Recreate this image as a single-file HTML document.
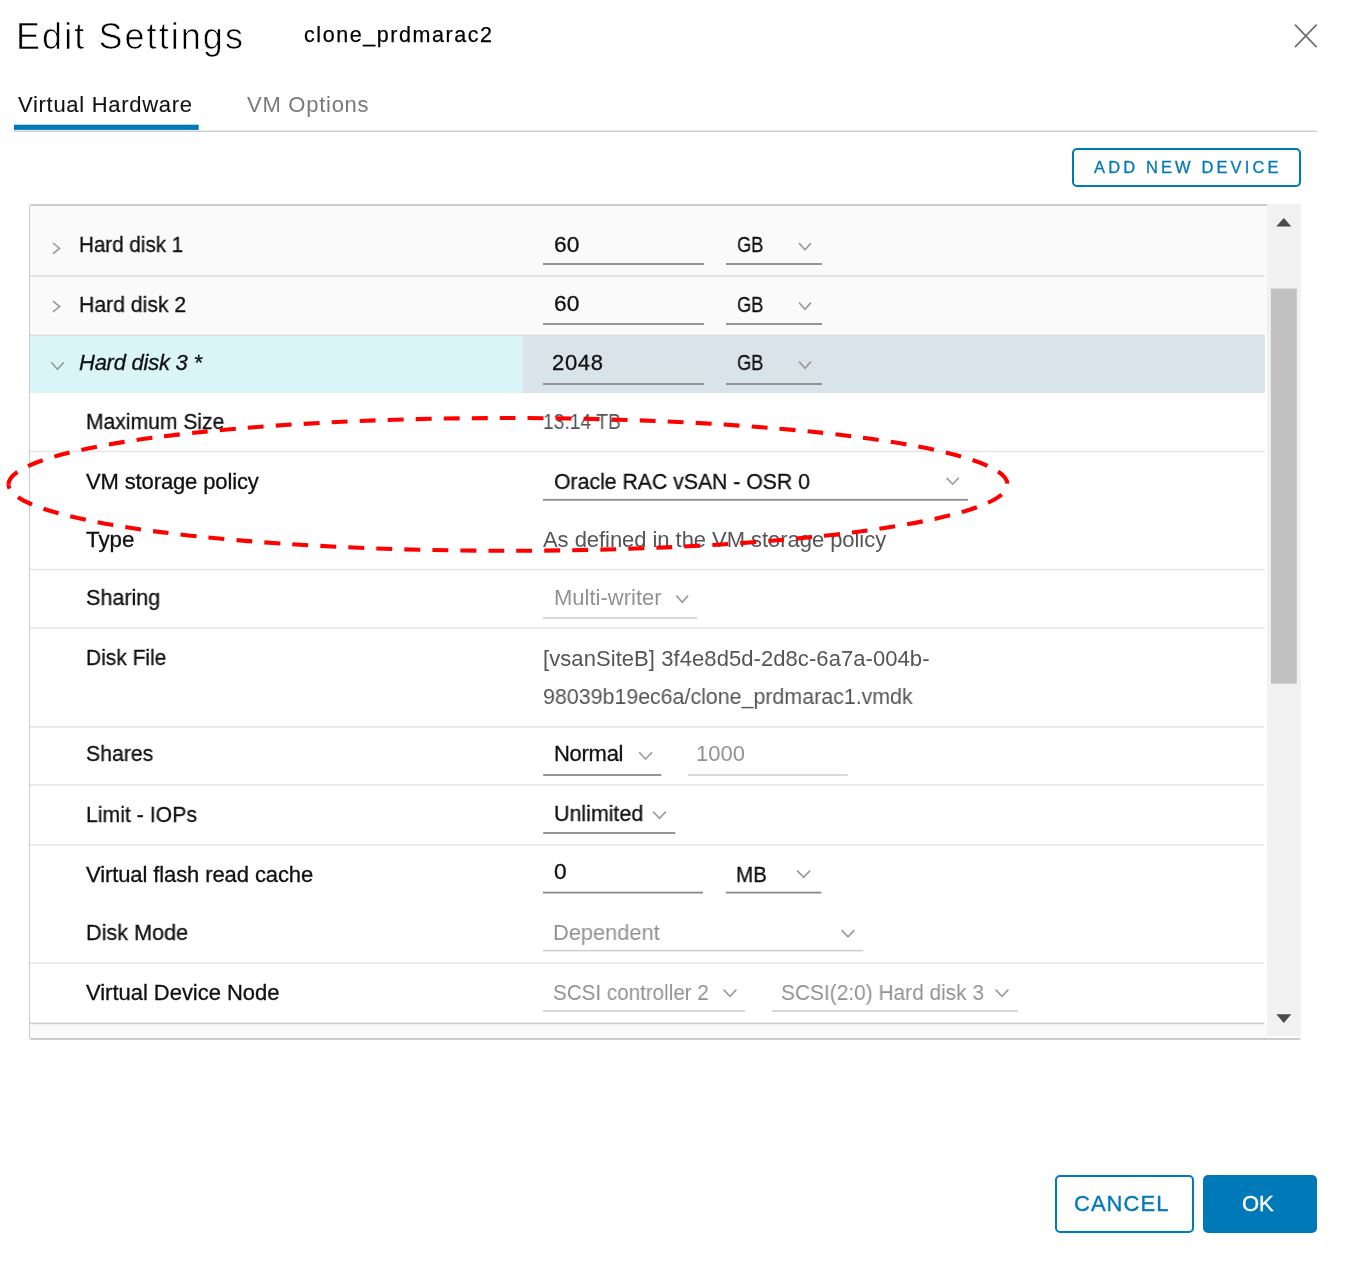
<!DOCTYPE html>
<html lang="en"><head><meta charset="utf-8"><title>Edit Settings</title>
<style>
html,body{margin:0;padding:0;background:#fff;}
body{width:1363px;height:1269px;position:relative;overflow:hidden;font-family:"Liberation Sans",sans-serif;}
.t{position:absolute;white-space:pre;transform-origin:0 50%;will-change:transform;}
.l,.i,.btn{position:absolute;}
.btn{box-sizing:border-box;}
#panel{position:absolute;left:29px;top:204.4px;width:1271.5px;height:836px;box-sizing:border-box;border:1.3px solid #cccccc;border-top-width:2px;border-bottom-width:2.4px;border-right:0;border-radius:3px;background:#fff;}
</style></head><body>
<div class="btn" style="left:1072px;top:148px;width:229px;height:39px;border:2px solid #0079b8;border-radius:5px"></div>
<div id="panel"></div>
<div class="l" style="left:30px;top:206px;width:1237px;height:130px;background:#fafafa"></div>
<div class="l" style="left:30px;top:336px;width:493px;height:57px;background:#d9f5f8"></div>
<div class="l" style="left:523px;top:336px;width:741.5px;height:57px;background:#d8e3ea"></div>
<div class="l" style="left:30px;top:1024px;width:1237px;height:14px;background:#fafafa"></div>
<div class="l" style="left:1267px;top:204px;width:34px;height:832px;background:#f1f1f1"></div>
<div class="btn" style="left:1054.6px;top:1175px;width:139.4px;height:57.7px;border:2px solid #0079b8;border-radius:5px"></div>
<div class="btn" style="left:1203px;top:1175px;width:113.8px;height:57.7px;background:#0079b8;border-radius:5px"></div>
<svg class="i" style="left:0;top:0" width="1363" height="1269" viewBox="0 0 1363 1269">
<rect x="14" y="130.50" width="1303.0" height="1.4" fill="#cdcdcd"/>
<rect x="14" y="124.7" width="184.7" height="5.2" fill="#0079b8"/>
<path d="M1295 24.6 L1316.6 47.2 M1316.6 24.6 L1295 47.2" stroke="#6e6e6e" stroke-width="1.7" fill="none"/>
<rect x="1270.9" y="288.6" width="25.9" height="395" fill="#c1c1c1"/>
<path d="M1276.3 226.6 L1283.8 217.9 L1291.3 226.6 Z" fill="#4a4a4a"/>
<path d="M1276.3 1014.2 L1291.3 1014.2 L1283.8 1022.9 Z" fill="#4a4a4a"/>
<rect x="30" y="275.00" width="1234.5" height="1.6" fill="#dedede"/>
<rect x="30" y="334.60" width="1234.5" height="1.6" fill="#dedede"/>
<rect x="30" y="450.60" width="1234.5" height="1.6" fill="#e6e6e6"/>
<rect x="30" y="568.80" width="1234.5" height="1.6" fill="#e6e6e6"/>
<rect x="30" y="627.40" width="1234.5" height="1.6" fill="#e6e6e6"/>
<rect x="30" y="726.00" width="1234.5" height="1.6" fill="#e6e6e6"/>
<rect x="30" y="784.00" width="1234.5" height="1.6" fill="#e6e6e6"/>
<rect x="30" y="844.20" width="1234.5" height="1.6" fill="#e6e6e6"/>
<rect x="30" y="962.20" width="1234.5" height="1.6" fill="#e6e6e6"/>
<rect x="30" y="1022.60" width="1234.5" height="1.6" fill="#cdcdcd"/>
<path d="M53.0 243.0 L59.6 248.4 L53.0 253.7" fill="none" stroke="#9a9a9a" stroke-width="1.6"/>
<path d="M53.0 301.2 L59.6 306.6 L53.0 311.9" fill="none" stroke="#9a9a9a" stroke-width="1.6"/>
<path d="M51.2 362.2 L57.5 369.4 L63.8 362.2" fill="none" stroke="#9a9a9a" stroke-width="1.6"/>
<rect x="543" y="263.10" width="161.0" height="1.8" fill="#8a8a8a"/>
<rect x="726" y="263.10" width="96.0" height="1.8" fill="#8a8a8a"/>
<rect x="543" y="323.10" width="161.0" height="1.8" fill="#8a8a8a"/>
<rect x="726" y="323.10" width="96.0" height="1.8" fill="#8a8a8a"/>
<rect x="543" y="383.10" width="161.0" height="1.8" fill="#8a8a8a"/>
<rect x="726" y="383.10" width="96.0" height="1.8" fill="#8a8a8a"/>
<path d="M799.1 243.1 L805.0 249.7 L810.9 243.1" fill="none" stroke="#9a9a9a" stroke-width="1.6"/>
<path d="M799.1 302.6 L805.0 309.2 L810.9 302.6" fill="none" stroke="#9a9a9a" stroke-width="1.6"/>
<path d="M799.1 361.6 L805.0 368.2 L810.9 361.6" fill="none" stroke="#9a9a9a" stroke-width="1.6"/>
<rect x="543" y="498.90" width="425.0" height="1.8" fill="#8a8a8a"/>
<path d="M946.6 477.9 L952.6 484.2 L958.7 477.9" fill="none" stroke="#9a9a9a" stroke-width="1.6"/>
<rect x="543" y="617.25" width="154.0" height="1.5" fill="#cdcdcd"/>
<path d="M676.4 595.6 L682.2 602.2 L688.0 595.6" fill="none" stroke="#9a9a9a" stroke-width="1.6"/>
<rect x="543.2" y="774.10" width="118.2" height="1.8" fill="#8a8a8a"/>
<path d="M639.2 752.2 L645.6 759.0 L652.0 752.2" fill="none" stroke="#9a9a9a" stroke-width="1.6"/>
<rect x="687.8" y="774.25" width="159.8" height="1.5" fill="#cdcdcd"/>
<rect x="543.2" y="832.10" width="132.1" height="1.8" fill="#8a8a8a"/>
<path d="M653.1 811.6 L659.5 818.4 L665.9 811.6" fill="none" stroke="#9a9a9a" stroke-width="1.6"/>
<rect x="543" y="891.70" width="160.0" height="1.8" fill="#8a8a8a"/>
<rect x="726" y="891.70" width="95.4" height="1.8" fill="#8a8a8a"/>
<path d="M797.2 870.6 L803.7 877.4 L810.1 870.6" fill="none" stroke="#9a9a9a" stroke-width="1.6"/>
<rect x="543" y="949.85" width="320.4" height="1.5" fill="#cdcdcd"/>
<path d="M841.6 930.1 L848.0 936.9 L854.4 930.1" fill="none" stroke="#9a9a9a" stroke-width="1.6"/>
<rect x="543" y="1010.25" width="202.0" height="1.5" fill="#cdcdcd"/>
<path d="M723.6 989.6 L730.0 996.4 L736.4 989.6" fill="none" stroke="#9a9a9a" stroke-width="1.6"/>
<rect x="771.8" y="1010.25" width="246.2" height="1.5" fill="#cdcdcd"/>
<path d="M995.6 989.6 L1002.0 996.4 L1008.4 989.6" fill="none" stroke="#9a9a9a" stroke-width="1.6"/>
</svg>
<span class="t" style="left:15.6px;top:14.8px;font-size:36px;line-height:43px;letter-spacing:2.07px;color:#000;-webkit-text-stroke:0.7px #fff;">Edit Settings</span>
<span class="t" style="left:303.6px;top:22.1px;font-size:21.5px;line-height:26px;letter-spacing:1.56px;color:#000;-webkit-text-stroke:0.25px #000;">clone_prdmarac2</span>
<span class="t" style="left:18.1px;top:92.3px;font-size:22px;line-height:26px;letter-spacing:0.7px;color:#111;-webkit-text-stroke:0.1px #111;">Virtual Hardware</span>
<span class="t" style="left:246.5px;top:92.3px;font-size:22px;line-height:26px;letter-spacing:0.74px;color:#7a7a7a;">VM Options</span>
<span class="t" style="left:1093.8px;top:157.3px;font-size:16.5px;line-height:20px;letter-spacing:3.12px;color:#0079b8;-webkit-text-stroke:0.3px #0079b8;">ADD NEW DEVICE</span>
<span class="t" style="left:78.6px;top:232.4px;font-size:22px;line-height:26px;letter-spacing:0px;color:#111;-webkit-text-stroke:0.3px #111;transform:scaleX(0.936);">Hard disk 1</span>
<span class="t" style="left:78.6px;top:292.2px;font-size:22px;line-height:26px;letter-spacing:0px;color:#111;-webkit-text-stroke:0.3px #111;transform:scaleX(0.963);">Hard disk 2</span>
<span class="t" style="left:78.6px;top:350.1px;font-size:22px;line-height:26px;letter-spacing:-0.25px;color:#111;font-style:italic;-webkit-text-stroke:0.3px #111;">Hard disk 3 *</span>
<span class="t" style="left:553.6px;top:231.9px;font-size:22px;line-height:26px;letter-spacing:0px;color:#111;-webkit-text-stroke:0.3px #111;transform:scaleX(1.034);">60</span>
<span class="t" style="left:736.6px;top:232.4px;font-size:22px;line-height:26px;letter-spacing:0px;color:#111;-webkit-text-stroke:0.3px #111;transform:scaleX(0.832);">GB</span>
<span class="t" style="left:553.6px;top:290.9px;font-size:22px;line-height:26px;letter-spacing:0px;color:#111;-webkit-text-stroke:0.3px #111;transform:scaleX(1.034);">60</span>
<span class="t" style="left:736.6px;top:292.4px;font-size:22px;line-height:26px;letter-spacing:0px;color:#111;-webkit-text-stroke:0.3px #111;transform:scaleX(0.832);">GB</span>
<span class="t" style="left:552.1px;top:350.4px;font-size:22px;line-height:26px;letter-spacing:0.68px;color:#111;-webkit-text-stroke:0.3px #111;">2048</span>
<span class="t" style="left:736.6px;top:350.4px;font-size:22px;line-height:26px;letter-spacing:0px;color:#111;-webkit-text-stroke:0.3px #111;transform:scaleX(0.832);">GB</span>
<span class="t" style="left:86.4px;top:408.6px;font-size:22px;line-height:26px;letter-spacing:0px;color:#111;-webkit-text-stroke:0.3px #111;transform:scaleX(0.959);">Maximum Size</span>
<span class="t" style="left:542.8px;top:408.6px;font-size:22px;line-height:26px;letter-spacing:0px;color:#555;transform:scaleX(0.876);">13.14 TB</span>
<span class="t" style="left:86.4px;top:468.9px;font-size:22px;line-height:26px;letter-spacing:-0.13px;color:#111;-webkit-text-stroke:0.3px #111;">VM storage policy</span>
<span class="t" style="left:553.5px;top:468.9px;font-size:22px;line-height:26px;letter-spacing:0px;color:#111;-webkit-text-stroke:0.3px #111;transform:scaleX(0.965);">Oracle RAC vSAN - OSR 0</span>
<span class="t" style="left:86.4px;top:526.9px;font-size:22px;line-height:26px;letter-spacing:0px;color:#111;-webkit-text-stroke:0.3px #111;transform:scaleX(1.016);">Type</span>
<span class="t" style="left:542.8px;top:526.9px;font-size:22px;line-height:26px;letter-spacing:-0.05px;color:#555;">As defined in the VM storage policy</span>
<span class="t" style="left:85.6px;top:584.5px;font-size:22px;line-height:26px;letter-spacing:0px;color:#111;-webkit-text-stroke:0.3px #111;transform:scaleX(0.979);">Sharing</span>
<span class="t" style="left:553.5px;top:584.5px;font-size:22px;line-height:26px;letter-spacing:0.0px;color:#929292;">Multi-writer</span>
<span class="t" style="left:86.4px;top:645.3px;font-size:22px;line-height:26px;letter-spacing:0px;color:#111;-webkit-text-stroke:0.3px #111;transform:scaleX(0.953);">Disk File</span>
<span class="t" style="left:543.3px;top:645.7px;font-size:22px;line-height:26px;letter-spacing:0.07px;color:#555;">[vsanSiteB] 3f4e8d5d-2d8c-6a7a-004b-</span>
<span class="t" style="left:543.3px;top:683.9px;font-size:22px;line-height:26px;letter-spacing:0px;color:#555;transform:scaleX(0.972);">98039b19ec6a/clone_prdmarac1.vmdk</span>
<span class="t" style="left:85.6px;top:741.3px;font-size:22px;line-height:26px;letter-spacing:0px;color:#111;-webkit-text-stroke:0.3px #111;transform:scaleX(0.964);">Shares</span>
<span class="t" style="left:553.6px;top:741.3px;font-size:22px;line-height:26px;letter-spacing:-0.28px;color:#111;-webkit-text-stroke:0.3px #111;">Normal</span>
<span class="t" style="left:696.1px;top:741.3px;font-size:22px;line-height:26px;letter-spacing:0.02px;color:#929292;">1000</span>
<span class="t" style="left:86.4px;top:801.5px;font-size:22px;line-height:26px;letter-spacing:0px;color:#111;-webkit-text-stroke:0.3px #111;transform:scaleX(0.966);">Limit - IOPs</span>
<span class="t" style="left:553.6px;top:800.9px;font-size:22px;line-height:26px;letter-spacing:0px;color:#111;-webkit-text-stroke:0.3px #111;transform:scaleX(0.973);">Unlimited</span>
<span class="t" style="left:85.6px;top:861.6px;font-size:22px;line-height:26px;letter-spacing:-0.1px;color:#111;-webkit-text-stroke:0.3px #111;">Virtual flash read cache</span>
<span class="t" style="left:554.1px;top:859.2px;font-size:22px;line-height:26px;letter-spacing:0px;color:#111;-webkit-text-stroke:0.3px #111;transform:scaleX(1.03);">0</span>
<span class="t" style="left:735.8px;top:861.9px;font-size:22px;line-height:26px;letter-spacing:0px;color:#111;-webkit-text-stroke:0.3px #111;transform:scaleX(0.938);">MB</span>
<span class="t" style="left:86.4px;top:919.9px;font-size:22px;line-height:26px;letter-spacing:0px;color:#111;-webkit-text-stroke:0.3px #111;transform:scaleX(0.982);">Disk Mode</span>
<span class="t" style="left:553.4px;top:919.9px;font-size:22px;line-height:26px;letter-spacing:0px;color:#929292;transform:scaleX(0.992);">Dependent</span>
<span class="t" style="left:85.6px;top:979.9px;font-size:22px;line-height:26px;letter-spacing:-0.03px;color:#111;-webkit-text-stroke:0.3px #111;">Virtual Device Node</span>
<span class="t" style="left:552.7px;top:980.1px;font-size:22px;line-height:26px;letter-spacing:0px;color:#929292;transform:scaleX(0.937);">SCSI controller 2</span>
<span class="t" style="left:780.5px;top:980.1px;font-size:22px;line-height:26px;letter-spacing:0px;color:#929292;transform:scaleX(0.949);">SCSI(2:0) Hard disk 3</span>
<span class="t" style="left:1074.1px;top:1191.2px;font-size:22px;line-height:26px;letter-spacing:1.03px;color:#0079b8;-webkit-text-stroke:0.35px #0079b8;">CANCEL</span>
<span class="t" style="left:1242.1px;top:1191.2px;font-size:22px;line-height:26px;letter-spacing:-0.1px;color:#fff;-webkit-text-stroke:0.35px #fff;">OK</span>
<svg class="i" style="left:0;top:400px" width="1030" height="170" viewBox="0 400 1030 170"><g fill="none" stroke="#f00" stroke-width="4.1" stroke-dasharray="15.9 12.1"><path d="M1007.5 484.4 A499.5 66.4 0 0 1 8.5 484.4" stroke-dashoffset="15.9"/><path d="M8.5 484.4 A499.5 66.4 0 0 1 1007.5 484.4" stroke-dashoffset="0"/></g></svg>
</body></html>
